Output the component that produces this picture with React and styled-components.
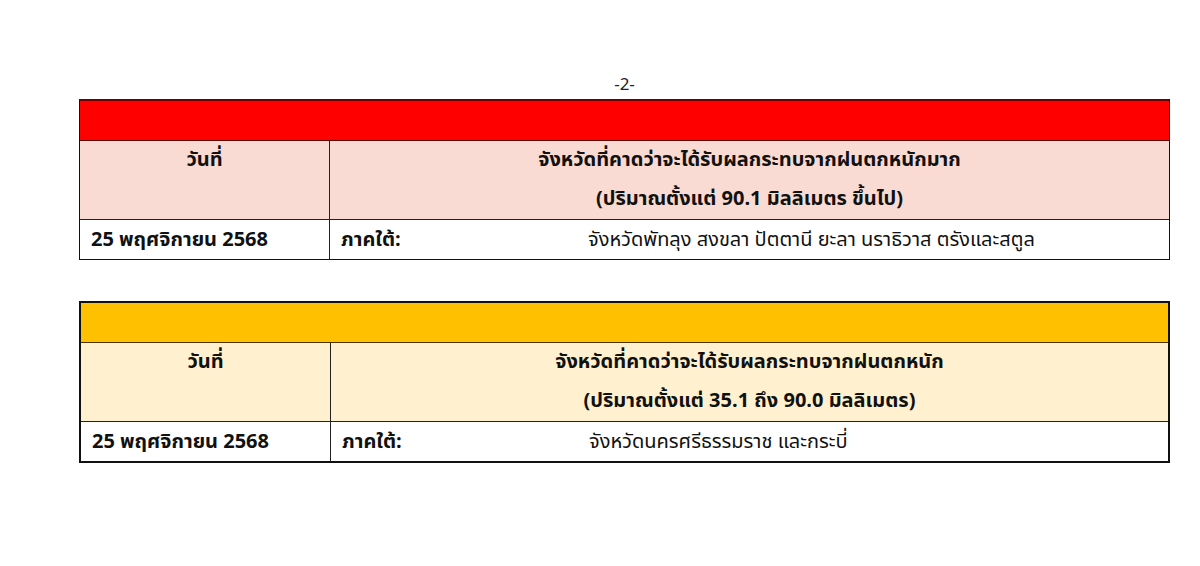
import React from 'react';
import styled, { createGlobalStyle } from 'styled-components';

const GlobalStyle = createGlobalStyle`
  html, body {
    margin: 0;
    padding: 0;
    background: #ffffff;
  }
  body {
    font-family: Tahoma, "Noto Sans Thai", "Loma", "Garuda", "Noto Sans", "DejaVu Sans", sans-serif;
    color: #111111;
  }
`;

// --- Styled Components ---
const Page = styled.div`
  width: 1200px;
  height: 566px;
  padding: 73px 0 0 79px;
  box-sizing: border-box;
`;

const Sheet = styled.div`
  width: 1091px;
  display: flex;
  flex-direction: column;
`;

const PageNumber = styled.div`
  height: 24px;
  line-height: 24px;
  margin-bottom: 2px;
  text-align: center;
  font-size: 17px;
  color: #222222;
`;

const TableStack = styled.div`
  display: flex;
  flex-direction: column;
  gap: 41px;
`;

const Table = styled.div`
  border: ${p => p.$edge}px solid #111111;
  border-top: 2px solid ${p => p.$topLine};
`;

const Band = styled.div`
  height: 39px;
  background: ${p => p.$color};
  border-bottom: 1px solid ${p => p.$line};
`;

const Row = styled.div`
  display: grid;
  grid-template-columns: 249px 1fr;
  background: ${p => p.$bg || '#ffffff'};
  border-bottom: ${p => (p.$last ? 'none' : '1px solid #222222')};
`;

const HeadCell = styled.div`
  height: 78px;
  text-align: center;
  font-weight: 700;
  font-size: 20px;
  line-height: 39px;
  & + & {
    border-left: 1px solid #222222;
  }
`;

const DataCell = styled.div`
  height: 39px;
  display: flex;
  align-items: center;
  padding-left: 11px;
  font-size: 20px;
  font-weight: ${p => (p.$bold ? 700 : 400)};
  & + & {
    border-left: 1px solid #222222;
  }
`;

const Region = styled.span`
  width: 247px;
  flex-shrink: 0;
  font-weight: 700;
`;

const Provinces = styled.span`
  font-weight: 400;
`;

// --- Data ---
const warnings = [
  {
    key: 'very-heavy',
    band: '#ff0000',
    bandLine: '#5c0000',
    topLine: '#6a0000',
    head: '#fadbd3',
    edge: 1,
    title: 'จังหวัดที่คาดว่าจะได้รับผลกระทบจากฝนตกหนักมาก',
    amount: '(ปริมาณตั้งแต่ 90.1 มิลลิเมตร ขึ้นไป)',
    date: '25 พฤศจิกายน 2568',
    region: 'ภาคใต้:',
    provinces: 'จังหวัดพัทลุง สงขลา ปัตตานี ยะลา นราธิวาส ตรังและสตูล',
  },
  {
    key: 'heavy',
    band: '#ffc000',
    bandLine: '#4a3300',
    topLine: '#111111',
    head: '#fff1cf',
    edge: 2,
    title: 'จังหวัดที่คาดว่าจะได้รับผลกระทบจากฝนตกหนัก',
    amount: '(ปริมาณตั้งแต่ 35.1 ถึง 90.0 มิลลิเมตร)',
    date: '25 พฤศจิกายน 2568',
    region: 'ภาคใต้:',
    provinces: 'จังหวัดนครศรีธรรมราช และกระบี่',
  },
];

function WarningTable({ item }) {
  return (
    <Table $edge={item.edge} $topLine={item.topLine}>
      <Band $color={item.band} $line={item.bandLine} />
      <Row $bg={item.head}>
        <HeadCell>วันที่</HeadCell>
        <HeadCell>
          {item.title}
          <br />
          {item.amount}
        </HeadCell>
      </Row>
      <Row $last>
        <DataCell $bold>{item.date}</DataCell>
        <DataCell>
          <Region>{item.region}</Region>
          <Provinces>{item.provinces}</Provinces>
        </DataCell>
      </Row>
    </Table>
  );
}

export default function App() {
  return (
    <>
      <GlobalStyle />
      <Page>
        <Sheet>
          <PageNumber>-2-</PageNumber>
          <TableStack>
            {warnings.map(w => (
              <WarningTable key={w.key} item={w} />
            ))}
          </TableStack>
        </Sheet>
      </Page>
    </>
  );
}
